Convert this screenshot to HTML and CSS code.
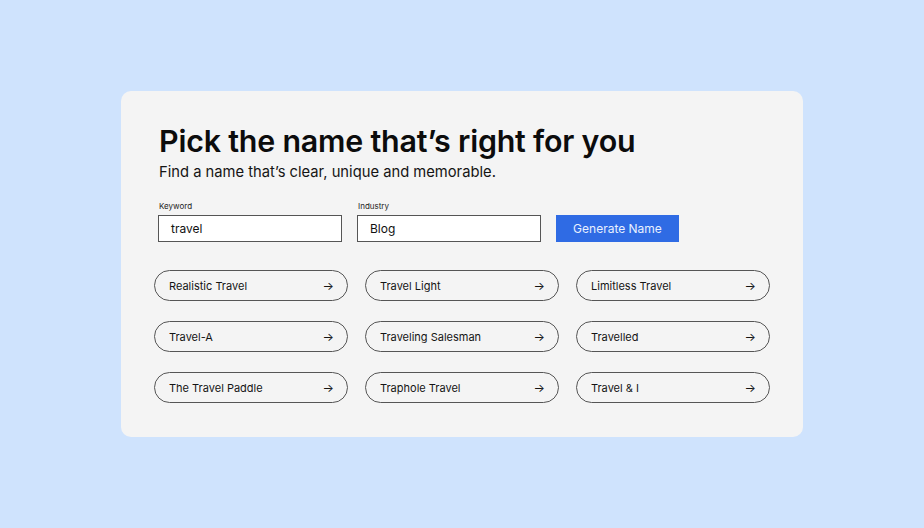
FILE: index.html
```html
<!DOCTYPE html>
<html>
<head>
<meta charset="utf-8">
<link rel="stylesheet" href="styles.css">
</head>
<body>
<div class="card">
  <h1 class="title">Pick the name that’s right for you</h1>
  <p class="subtitle">Find a name that’s clear, unique and memorable.</p>
  <div class="form">
    <label class="field">
      <span class="label">Keyword</span>
      <span class="input">travel</span>
    </label>
    <label class="field">
      <span class="label">Industry</span>
      <span class="input">Blog</span>
    </label>
    <button class="btn">Generate Name</button>
  </div>
  <div class="grid">
    <div class="pill"><span>Realistic Travel</span><span class="arrow">→</span></div>
    <div class="pill"><span>Travel Light</span><span class="arrow">→</span></div>
    <div class="pill"><span>Limitless Travel</span><span class="arrow">→</span></div>
    <div class="pill"><span>Travel-A</span><span class="arrow">→</span></div>
    <div class="pill"><span>Traveling Salesman</span><span class="arrow">→</span></div>
    <div class="pill"><span>Travelled</span><span class="arrow">→</span></div>
    <div class="pill"><span>The Travel Paddle</span><span class="arrow">→</span></div>
    <div class="pill"><span>Traphole Travel</span><span class="arrow">→</span></div>
    <div class="pill"><span>Travel &amp; I</span><span class="arrow">→</span></div>
  </div>
</div>
</body>
</html>
```
FILE: styles.css
```css
html, body {
  margin: 0;
  padding: 0;
}
body {
  width: 924px;
  height: 528px;
  background: #cfe3fd;
  font-family: Inter, "Noto Sans", sans-serif;
  color: #111;
  padding-top: 91px;
  padding-left: 121px;
  box-sizing: border-box;
}
.card {
  width: 682px;
  height: 346px;
  background: #f4f4f4;
  border-radius: 10px;
  box-sizing: border-box;
  padding: 30px 33px 0 33px;
}
.title {
  margin: 0 0 0 5px;
  font-size: 30.4px;
  font-weight: 600;
  line-height: 40px;
  letter-spacing: -0.2px;
  color: #0c0c0c;
}
.subtitle {
  margin: 0 0 0 5px;
  font-size: 14.75px;
  line-height: 22px;
  color: #151515;
}
.form {
  display: flex;
  align-items: flex-end;
  gap: 15px;
  margin: 18px 0 0 4px;
}
.field {
  display: flex;
  flex-direction: column;
}
.label {
  font-size: 8px;
  line-height: 11px;
  color: #222;
  margin: 0 0 3px 1px;
}
.input {
  width: 184px;
  height: 27px;
  box-sizing: border-box;
  border: 1px solid #555;
  background: #fff;
  font-size: 12px;
  line-height: 25px;
  padding-left: 12px;
  color: #111;
}
.btn {
  width: 123px;
  height: 27px;
  border: 0;
  background: #2f6be4;
  color: #e8f0ff;
  font-family: inherit;
  font-size: 12px;
  padding: 0;
}
.grid {
  display: grid;
  grid-template-columns: repeat(3, 194px);
  column-gap: 17px;
  row-gap: 20px;
  margin-top: 28px;
}
.pill {
  height: 31px;
  box-sizing: border-box;
  border: 1px solid #555;
  border-radius: 16px;
  display: flex;
  align-items: center;
  justify-content: space-between;
  padding: 0 13px 0 14px;
  font-size: 11px;
  color: #151515;
}
.arrow {
  font-size: 12px;
}
```
